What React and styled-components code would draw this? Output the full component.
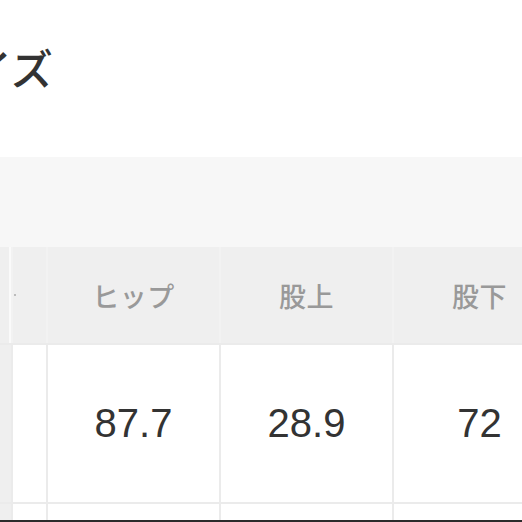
import React from "react";
import styled, { createGlobalStyle } from "styled-components";

const GlobalStyle = createGlobalStyle`
  html, body { margin: 0; padding: 0; background: #fff; }
  body { font-family: "Noto Sans CJK JP", "Noto Sans", sans-serif; }
`;

const Page = styled.div`
  width: 522px;
  height: 522px;
  overflow: hidden;
  display: flex;
  flex-direction: column;
  background: #fff;
`;

const Content = styled.div`
  flex: 1;
  overflow: hidden;
  display: flex;
  flex-direction: column;
`;

const Title = styled.h2`
  margin: 46px 0 0 -72px;
  height: 42px;
  font-size: 42px;
  line-height: 42px;
  font-weight: 500;
  color: #333;
  white-space: nowrap;
`;

const Band = styled.div`
  margin-top: 69px;
  height: 90px;
  flex: none;
  background: #f7f7f7;
`;

const Table = styled.div`
  display: flex;
  flex-direction: column;
  gap: 2px;
  background: #ebebeb;
  width: 700px;
`;

const Row = styled.div`
  display: grid;
  grid-template-columns: 11px 33px 171px 171px 171px 171px;
  column-gap: 2px;
  height: ${(p) => p.$h}px;
  flex: none;
  background: ${(p) => (p.$head ? "#f2f2f2" : "#ebebeb")};
`;

const Cell = styled.div`
  display: flex;
  align-items: center;
  justify-content: center;
  background: ${(p) => (p.$head || p.$lead ? "#efefef" : "#fff")};
  box-shadow: ${(p) => (p.$edge ? "inset -2px 0 0 #fafafa" : "none")};
`;

const HeadText = styled.span`
  font-family: "Noto Sans CJK JP", "Noto Sans", sans-serif;
  font-size: 27px;
  font-weight: 500;
  color: #999;
  letter-spacing: 0.5px;
`;

const Value = styled.span`
  font-family: "Liberation Sans", Arial, sans-serif;
  font-size: 40px;
  color: #333;
`;

const Dot = styled.span`
  display: block;
  width: 2px;
  height: 2px;
  border-radius: 1px;
  background: #aaa;
  margin-left: -30px;
`;

const BottomBar = styled.div`
  height: 2px;
  flex: none;
  background: #2b2b2b;
`;

const headers = ["ヒップ", "股上", "股下", ""];
const values = ["87.7", "28.9", "72", ""];

export default function App() {
  return (
    <>
      <GlobalStyle />
      <Page>
        <Content>
          <Title>サイズ</Title>
          <Band />
          <Table>
            <Row $h={96} $head>
              <Cell $head $edge />
              <Cell $head>
                <Dot />
              </Cell>
              {headers.map((h, i) => (
                <Cell $head key={i}>
                  <HeadText>{h}</HeadText>
                </Cell>
              ))}
            </Row>
            <Row $h={157}>
              <Cell $lead />
              <Cell />
              {values.map((v, i) => (
                <Cell key={i}>
                  <Value>{v}</Value>
                </Cell>
              ))}
            </Row>
            <Row $h={40}>
              <Cell $lead />
              <Cell />
              <Cell />
              <Cell />
              <Cell />
              <Cell />
            </Row>
          </Table>
        </Content>
        <BottomBar />
      </Page>
    </>
  );
}
